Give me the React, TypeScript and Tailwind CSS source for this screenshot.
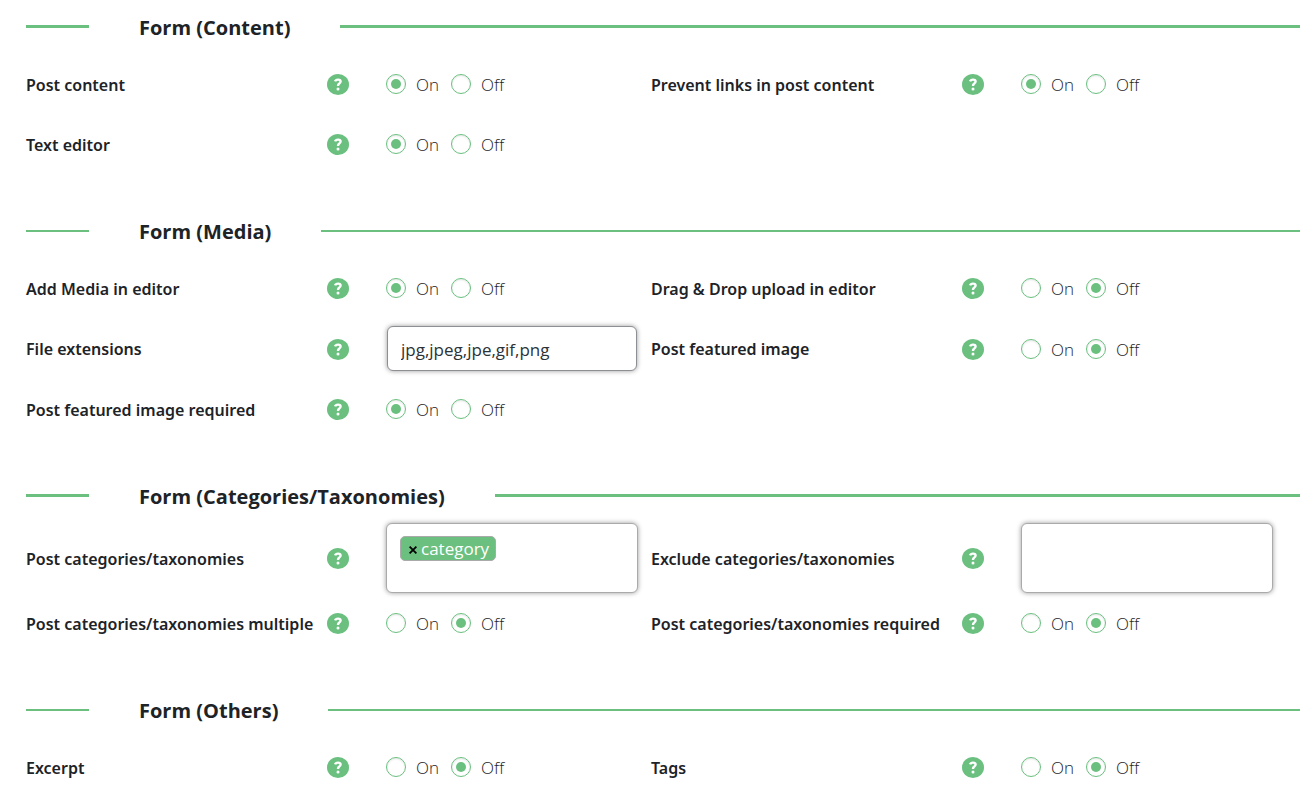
import React, { useState } from 'react';
import clsx from 'clsx';

type Choice = 'on' | 'off';

interface FieldProps {
  id: string;
  label: string;
  tall?: boolean;
  children: React.ReactNode;
}

const HelpButton: React.FC<{ label: string }> = ({ label }) => (
  <button type="button" aria-label={`Help: ${label}`} className="shrink-0 self-center pt-px">
    <svg viewBox="0 0 22 21" className="h-[21px] w-[22px]" aria-hidden="true">
      <ellipse cx="11" cy="10.5" rx="11" ry="10.5" fill="#6bc080" />
      <path
        d="M8.1 7.4C8.6 5.9 9.8 5.6 11 5.6c1.7 0 2.6.8 2.6 2 0 1.1-.8 1.6-1.5 2.1-.7.5-1.1.9-1.1 2.2"
        fill="none"
        stroke="#fff"
        strokeWidth="2.4"
      />
      <circle cx="11" cy="14.9" r="1.5" fill="#fff" />
    </svg>
  </button>
);

// Renders three cells of the section grid: label, help icon and control
const Field: React.FC<FieldProps> = ({ id, label, tall, children }) => (
  <div role="group" aria-labelledby={`${id}-label`} className="contents">
    <label
      id={`${id}-label`}
      htmlFor={id}
      className="self-center pt-px font-['Noto_Sans',sans-serif] text-base leading-6 font-semibold whitespace-nowrap"
    >
      {label}
    </label>
    <HelpButton label={label} />
    <div className={clsx('flex items-center', tall ? 'min-h-[61px]' : 'min-h-[60px]')}>{children}</div>
  </div>
);

const radioClass =
  "grid h-5 w-5 shrink-0 appearance-none place-content-center rounded-full border border-[#6bc080] bg-white shadow-[inset_0_1px_2px_rgba(0,0,0,0.1)] checked:before:h-[10px] checked:before:w-[10px] checked:before:rounded-full checked:before:bg-[#6bc080] checked:before:content-['']";

const RadioField: React.FC<{ id: string; label: string; initial: Choice }> = ({ id, label, initial }) => {
  const [value, setValue] = useState<Choice>(initial);

  return (
    <Field id={id} label={label}>
      <input id={id} type="radio" name={id} checked={value === 'on'} onChange={() => setValue('on')} className={radioClass} />
      <label htmlFor={id} className="w-[45px] pt-[2px] pl-[10px] text-[17px] leading-6 font-light">
        On
      </label>
      <input id={`${id}-off`} type="radio" name={id} checked={value === 'off'} onChange={() => setValue('off')} className={radioClass} />
      <label htmlFor={`${id}-off`} className="pt-[2px] pl-[10px] text-[17px] leading-6 font-light">
        Off
      </label>
    </Field>
  );
};

const TextField: React.FC<{ id: string; label: string; initial: string }> = ({ id, label, initial }) => (
  <Field id={id} label={label} tall>
    <input
      id={id}
      type="text"
      defaultValue={initial}
      className="ml-px h-[45px] w-[250px] rounded-md border border-[#8c8f94] bg-white px-[13px] pt-[2px] text-[17px] text-[#2c3338] shadow-[0_0_5px_rgba(0,0,0,0.4)]"
    />
  </Field>
);

const TagsField: React.FC<{ id: string; label: string; initial: string[] }> = ({ id, label, initial }) => {
  const [tags, setTags] = useState(initial);

  return (
    <Field id={id} label={label}>
      <div className="flex h-[70px] w-[252px] flex-wrap items-start rounded-md border border-[#aaa] bg-white px-[13px] py-3 shadow-[0_0_5px_rgba(0,0,0,0.4)]">
        {tags.map((tag) => (
          <span key={tag} className="flex h-[25px] items-center rounded-[5px] border border-[#aaa] bg-[#6bc080] pr-[6px] pl-2 text-white">
            <button
              type="button"
              aria-label={`Remove ${tag}`}
              onClick={() => setTags(tags.filter((t) => t !== tag))}
              className="mr-1 text-black"
            >
              <svg viewBox="0 0 9 9" className="mt-[2px] h-2 w-2" stroke="currentColor" strokeWidth="2" aria-hidden="true">
                <path d="M.7.7l7.6 7.6M8.3.7L.7 8.3" />
              </svg>
            </button>
            <span className="text-[17px] leading-5">{tag}</span>
          </span>
        ))}
        <input id={id} type="text" className="h-6 w-0 flex-1 bg-transparent outline-none" />
      </div>
    </Field>
  );
};

const Section: React.FC<{ title: string; thick?: boolean; children: React.ReactNode }> = ({ title, thick, children }) => {
  const line = clsx('bg-[#6bc080]', thick ? 'h-[3px]' : 'h-[2px]');

  return (
    <section className="mb-[30px]">
      <div className="mb-px flex h-[53px] items-center gap-[50px]">
        <div className={clsx('w-[63px]', line)} />
        <h2 className="pt-[3px] text-xl leading-7 font-bold">{title}</h2>
        <div className={clsx('flex-1', line)} />
      </div>
      <div className="grid grid-cols-[301fr_59fr_265fr_311fr_59fr_279fr]">{children}</div>
    </section>
  );
};

const App: React.FC = () => (
  <form className="overflow-x-hidden bg-white pl-[26px] font-['Open_Sans','Noto_Sans',sans-serif] text-[#1d2327]">
    <Section title="Form (Content)" thick>
      <RadioField id="post-content" label="Post content" initial="on" />
      <RadioField id="prevent-links" label="Prevent links in post content" initial="on" />
      <RadioField id="text-editor" label="Text editor" initial="on" />
    </Section>

    <Section title="Form (Media)">
      <RadioField id="add-media" label="Add Media in editor" initial="on" />
      <RadioField id="drag-drop" label="Drag & Drop upload in editor" initial="off" />
      <TextField id="file-extensions" label="File extensions" initial="jpg,jpeg,jpe,gif,png" />
      <RadioField id="featured-image" label="Post featured image" initial="off" />
      <RadioField id="featured-required" label="Post featured image required" initial="on" />
    </Section>

    <Section title="Form (Categories/Taxonomies)" thick>
      <TagsField id="categories" label="Post categories/taxonomies" initial={['category']} />
      <TagsField id="exclude-categories" label="Exclude categories/taxonomies" initial={[]} />
      <RadioField id="categories-multiple" label="Post categories/taxonomies multiple" initial="off" />
      <RadioField id="categories-required" label="Post categories/taxonomies required" initial="off" />
    </Section>

    <Section title="Form (Others)">
      <RadioField id="excerpt" label="Excerpt" initial="off" />
      <RadioField id="tags" label="Tags" initial="off" />
    </Section>
  </form>
);

export default App;
